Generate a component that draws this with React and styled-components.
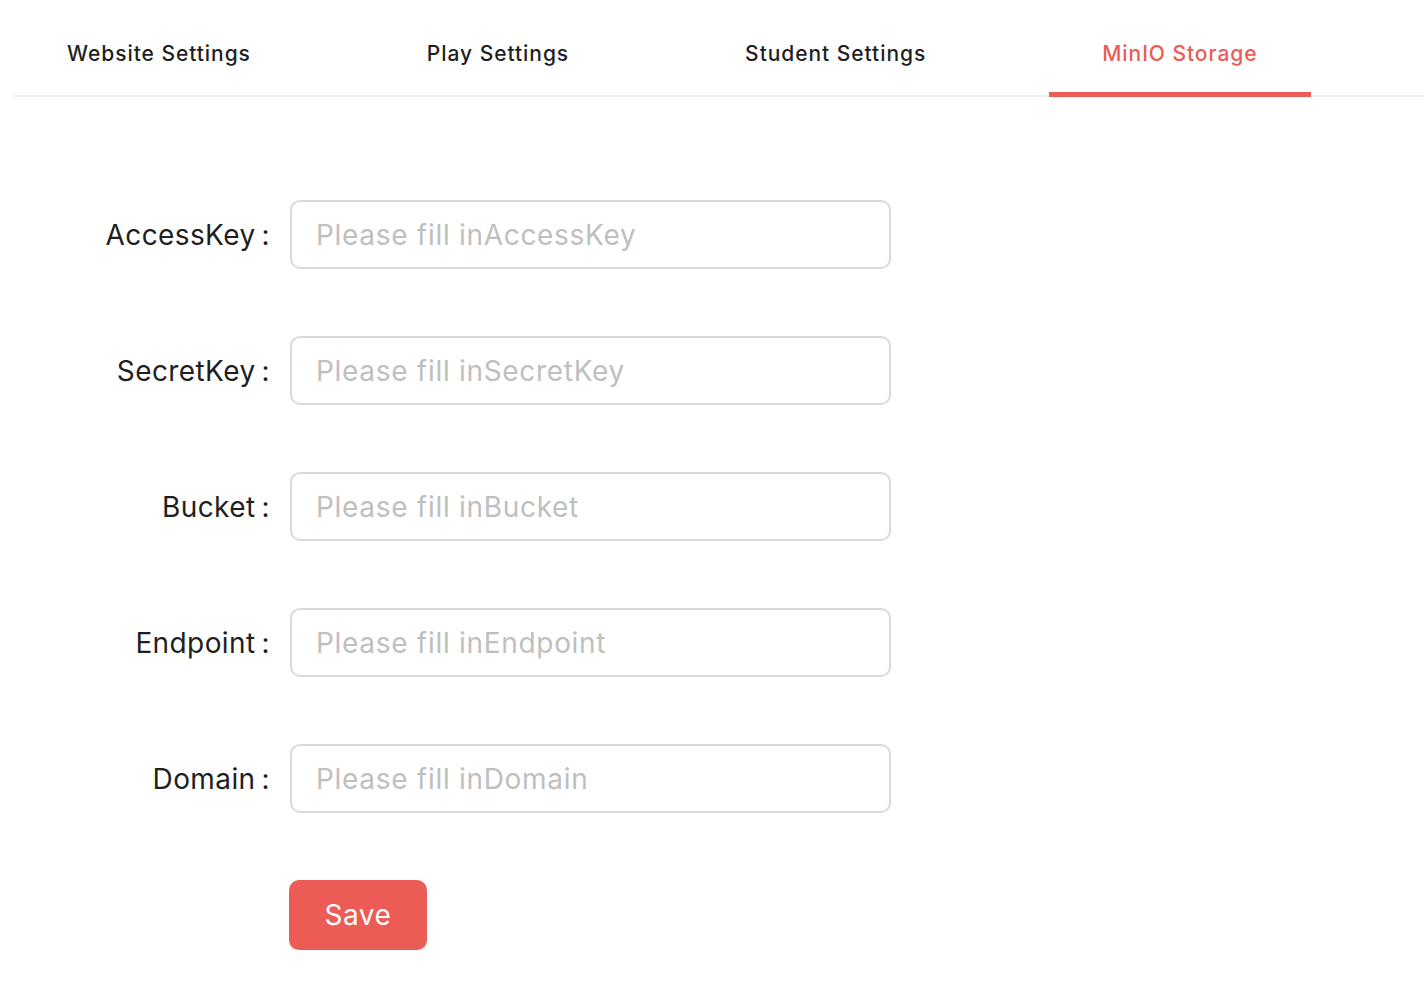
import React, { useState } from 'react';
import styled, { createGlobalStyle } from 'styled-components';

const GlobalStyle = createGlobalStyle`
  html, body {
    margin: 0;
    padding: 0;
    background: #fff;
    font-family: Inter, 'Noto Sans', sans-serif;
    color: #1f1f1f;
  }
`;

const Page = styled.div`
  padding-left: 14px;
`;

const TabBar = styled.nav`
  display: flex;
  gap: 70px;
  height: 95px;
  border-bottom: 2px solid #f0f0f0;
`;

const Tab = styled.button`
  position: relative;
  border: 0;
  background: none;
  padding: 11px 53px 0;
  font-family: inherit;
  font-size: 21px;
  font-weight: 500;
  letter-spacing: 0.95px;
  color: ${(p) => (p.$active ? '#ec5b56' : '#1f1f1f')};
  cursor: pointer;

  &::after {
    content: '';
    position: absolute;
    left: 0;
    right: 0;
    bottom: -2px;
    height: 5px;
    background: ${(p) => (p.$active ? '#ec5b56' : 'transparent')};
  }
`;

const Form = styled.form`
  display: flex;
  flex-direction: column;
  gap: 67px;
  padding-top: 103px;
`;

const Row = styled.div`
  display: flex;
  align-items: center;
`;

const Label = styled.label`
  width: 256px;
  text-align: right;
  font-size: 28px;
  letter-spacing: 0.4px;
  color: #1f1f1f;
  padding-right: 20px;
  white-space: nowrap;

  &::after {
    content: ':';
    margin-left: 6px;
  }
`;

const Input = styled.input`
  box-sizing: border-box;
  width: 601px;
  height: 69px;
  border: 2px solid #d9d9d9;
  border-radius: 10px;
  padding: 0 24px;
  font-family: inherit;
  font-size: 28px;
  letter-spacing: 0.7px;
  color: #1f1f1f;
  outline: none;

  &::placeholder {
    color: #bfbfbf;
  }
`;

const Actions = styled.div`
  padding-left: 275px;
`;

const SaveButton = styled.button`
  width: 138px;
  height: 70px;
  border: 0;
  border-radius: 10px;
  background: #ec5b56;
  color: #fff;
  font-family: inherit;
  font-size: 28px;
  letter-spacing: 0.5px;
  box-shadow: 0 4px 0 rgba(236, 91, 86, 0.1);
  cursor: pointer;
`;

const tabs = ['Website Settings', 'Play Settings', 'Student Settings', 'MinIO Storage'];
const fields = ['AccessKey', 'SecretKey', 'Bucket', 'Endpoint', 'Domain'];

export default function App() {
  const [active, setActive] = useState(3);

  return (
    <Page>
      <GlobalStyle />
      <TabBar>
        {tabs.map((t, i) => (
          <Tab key={t} $active={i === active} onClick={() => setActive(i)}>
            {t}
          </Tab>
        ))}
      </TabBar>
      <Form onSubmit={(e) => e.preventDefault()}>
        {fields.map((f) => (
          <Row key={f}>
            <Label htmlFor={f}>{f}</Label>
            <Input id={f} placeholder={`Please fill in${f}`} />
          </Row>
        ))}
        <Actions>
          <SaveButton type="submit">Save</SaveButton>
        </Actions>
      </Form>
    </Page>
  );
}
